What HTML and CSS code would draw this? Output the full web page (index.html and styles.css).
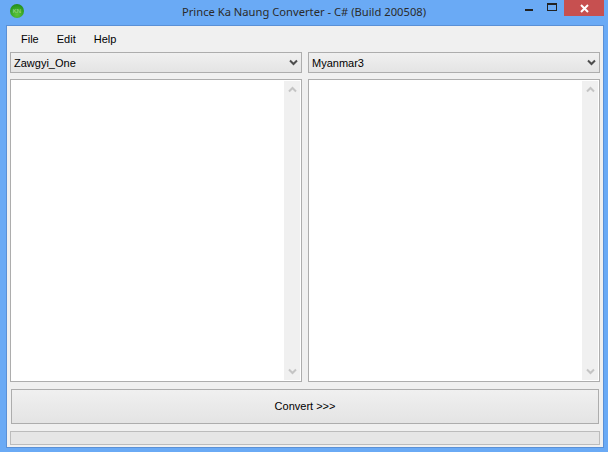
FILE: index.html
```html
<!DOCTYPE html>
<html lang="en">
<head>
    <meta charset="UTF-8">
    <meta name="viewport" content="width=device-width, initial-scale=1.0">
    <title>Prince Ka Naung Converter</title>
    <link rel="stylesheet" href="styles.css">
</head>
<body>

    <div class="window">
        <div class="titlebar">
            <div class="app-icon"><span>KN</span></div>
            <div class="title">Prince Ka Naung Converter - C# (Build 200508)</div>
            <div class="controls">
                <div class="btn-min"></div>
                <div class="btn-max"></div>
                <div class="btn-close">
                    <svg width="9" height="9" viewBox="0 0 9 9"><path d="M1 1L8 8M8 1L1 8" stroke="#fff" stroke-width="2" fill="none"/></svg>
                </div>
            </div>
        </div>

        <div class="client">
            <div class="menu">
                <span class="menu-item">File</span>
                <span class="menu-item">Edit</span>
                <span class="menu-item">Help</span>
            </div>

            <div class="panes">
                <div class="pane">
                    <div class="combo">
                        <span>Zawgyi_One</span>
                        <svg width="9" height="7" viewBox="0 0 9 7"><path d="M1 1.5L4.5 5L8 1.5" stroke="#4d4d4d" stroke-width="2" fill="none"/></svg>
                    </div>
                    <div class="textbox">
                        <div class="scrollbar">
                            <svg width="9" height="7" viewBox="0 0 9 7"><path d="M1 5.5L4.5 2L8 5.5" stroke="#c4c4c4" stroke-width="2" fill="none"/></svg>
                            <svg width="9" height="7" viewBox="0 0 9 7"><path d="M1 1.5L4.5 5L8 1.5" stroke="#c4c4c4" stroke-width="2" fill="none"/></svg>
                        </div>
                    </div>
                </div>
                <div class="pane">
                    <div class="combo">
                        <span>Myanmar3</span>
                        <svg width="9" height="7" viewBox="0 0 9 7"><path d="M1 1.5L4.5 5L8 1.5" stroke="#4d4d4d" stroke-width="2" fill="none"/></svg>
                    </div>
                    <div class="textbox">
                        <div class="scrollbar">
                            <svg width="9" height="7" viewBox="0 0 9 7"><path d="M1 5.5L4.5 2L8 5.5" stroke="#c4c4c4" stroke-width="2" fill="none"/></svg>
                            <svg width="9" height="7" viewBox="0 0 9 7"><path d="M1 1.5L4.5 5L8 1.5" stroke="#c4c4c4" stroke-width="2" fill="none"/></svg>
                        </div>
                    </div>
                </div>
            </div>

            <button class="convert">Convert &gt;&gt;&gt;</button>
            <div class="statusbar"></div>
        </div>
    </div>

</body>
</html>
```

FILE: styles.css
```css
html, body {
    margin: 0;
    height: 100%;
}
body {
    background-color: #6aaaf5;
    font-family: "Liberation Sans", Arial, sans-serif;
    font-size: 11px;
    color: #000;
    overflow: hidden;
}
.window {
    width: 608px;
    height: 452px;
    display: flex;
    flex-direction: column;
}
.titlebar {
    height: 25px;
    flex-shrink: 0;
    display: grid;
    grid-template-columns: 1fr auto 1fr;
}
.app-icon {
    width: 14px;
    height: 14px;
    margin: 4px 0 0 10px;
    border-radius: 50%;
    background: radial-gradient(circle at 50% 75%, #5cc43c 0%, #2f9f22 60%, #1c7a1b 100%);
    display: flex;
    align-items: center;
    justify-content: center;
}
.app-icon span {
    font-size: 6px;
    line-height: 6px;
    color: #a9dd9c;
}
.title {
    font-family: "Noto Sans", Arial, sans-serif;
    font-size: 11.2px;
    line-height: 24px;
    color: #2a2a2a;
    white-space: nowrap;
}
.controls {
    display: flex;
    justify-content: flex-end;
    align-items: flex-start;
    padding-right: 4px;
}
.btn-min {
    width: 8px;
    height: 2px;
    margin: 9px 14px 0 0;
    background-color: #222;
}
.btn-max {
    width: 8px;
    height: 5px;
    margin: 3px 7px 0 0;
    border: 1px solid #222;
    border-top-width: 2px;
}
.btn-close {
    width: 40px;
    height: 16px;
    background-color: #c75050;
    display: flex;
    align-items: center;
    justify-content: center;
}
.client {
    width: 598px;
    height: 423px;
    margin-left: 6px;
    box-sizing: border-box;
    background-color: #f0f0f0;
    border: 1px solid #5a90d6;
    padding: 0 3px 3px 3px;
    display: flex;
    flex-direction: column;
}
.menu {
    height: 26px;
    flex-shrink: 0;
    display: flex;
    align-items: center;
    padding-left: 11px;
    gap: 18px;
}
.panes {
    display: flex;
    gap: 6px;
}
.pane {
    width: 292px;
    display: flex;
    flex-direction: column;
    gap: 6px;
}
.combo {
    height: 21px;
    box-sizing: border-box;
    border: 1px solid #adadad;
    background: linear-gradient(#f0f0f0, #e4e4e4);
    display: flex;
    align-items: center;
    justify-content: space-between;
    padding: 0 3px;
}
.textbox {
    height: 303px;
    box-sizing: border-box;
    border: 1px solid #adadad;
    background-color: #fff;
    padding: 1px;
    display: flex;
    justify-content: flex-end;
}
.scrollbar {
    width: 16px;
    background-color: #f0f0f0;
    display: flex;
    flex-direction: column;
    justify-content: space-between;
    align-items: center;
    padding: 5px 0;
    box-sizing: border-box;
}
.convert {
    height: 35px;
    margin: 7px 1px 0 1px;
    flex-shrink: 0;
    border: 1px solid #adadad;
    background: linear-gradient(#f0f0f0, #e4e4e4);
    font-family: "Liberation Sans", Arial, sans-serif;
    font-size: 11px;
    color: #000;
    padding: 0 0 2px 0;
}
.statusbar {
    height: 14px;
    margin-top: 7px;
    flex-shrink: 0;
    box-sizing: border-box;
    border: 1px solid #bcbcbc;
    background-color: #e6e6e6;
}
```
